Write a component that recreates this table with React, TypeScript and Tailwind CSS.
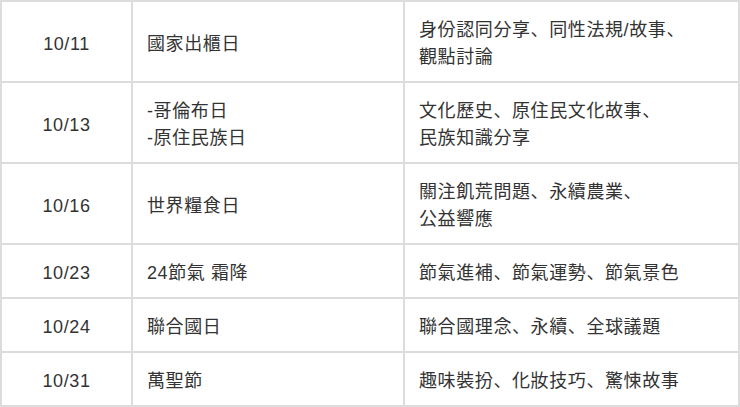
const rows: { date: string; day: string[]; topics: string[] }[] = [
  { date: '10/11', day: ['國家出櫃日'], topics: ['身份認同分享、同性法規/故事、', '觀點討論'] },
  { date: '10/13', day: ['-哥倫布日', '-原住民族日'], topics: ['文化歷史、原住民文化故事、', '民族知識分享'] },
  { date: '10/16', day: ['世界糧食日'], topics: ['關注飢荒問題、永續農業、', '公益響應'] },
  { date: '10/23', day: ['24節氣 霜降'], topics: ['節氣進補、節氣運勢、節氣景色'] },
  { date: '10/24', day: ['聯合國日'], topics: ['聯合國理念、永續、全球議題'] },
  { date: '10/31', day: ['萬聖節'], topics: ['趣味裝扮、化妝技巧、驚悚故事'] },
];

function Lines({ items }: { items: string[] }) {
  return (
    <>
      {items.map((t) => (
        <div key={t}>{t}</div>
      ))}
    </>
  );
}

export default function App() {
  return (
    <div className="w-[740px] h-[407px] overflow-hidden bg-white">
      <table
        className="w-[738px] border-collapse table-fixed text-[18px] leading-[27px] tracking-[0.6px] text-[#333]"
        style={{ fontFamily: '"Liberation Sans", "Noto Sans CJK JP", sans-serif' }}
      >
        <colgroup>
          <col className="w-[131px]" />
          <col className="w-[272px]" />
          <col className="w-[335px]" />
        </colgroup>
        <tbody>
          <tr className="h-px">
            <td className="p-0 border-x-2 border-b-2 border-[#dcdcdc]" />
            <td className="p-0 border-x-2 border-b-2 border-[#dcdcdc]" />
            <td className="p-0 border-x-2 border-b-2 border-[#dcdcdc]" />
          </tr>
          {rows.map((r) => (
            <tr key={r.date}>
              <td className="border-2 border-[#dcdcdc] pt-[15px] pb-[10px] text-center align-middle">{r.date}</td>
              <td className="border-2 border-[#dcdcdc] pt-[15px] pb-[10px] px-[14px] align-middle">
                <Lines items={r.day} />
              </td>
              <td className="border-2 border-[#dcdcdc] pt-[15px] pb-[10px] px-[14px] align-middle">
                <Lines items={r.topics} />
              </td>
            </tr>
          ))}
        </tbody>
      </table>
    </div>
  );
}
